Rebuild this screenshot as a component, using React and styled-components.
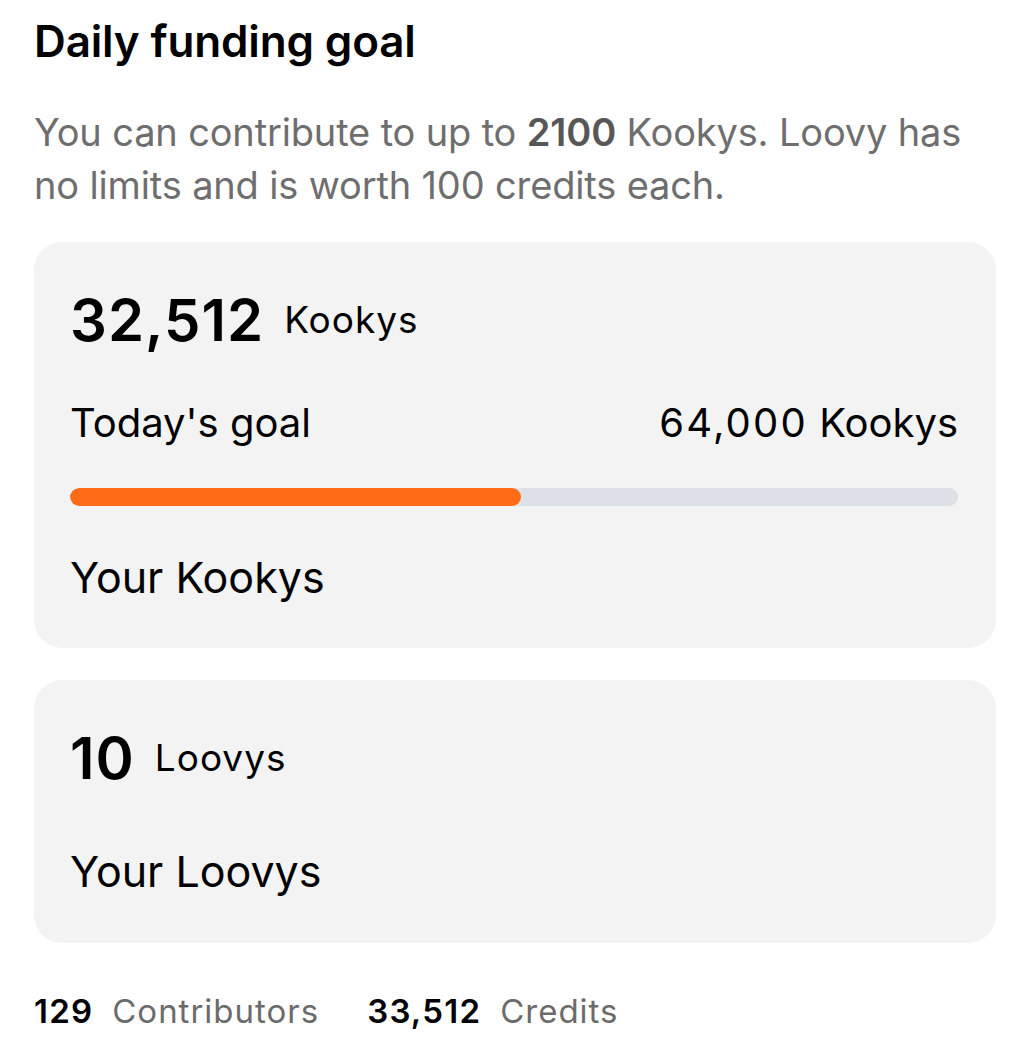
import React from "react";
import styled, { createGlobalStyle } from "styled-components";

const Global = createGlobalStyle`
  html, body { margin: 0; padding: 0; background: #ffffff; }
  body { font-family: Inter, "Noto Sans", "Liberation Sans", sans-serif; color: #000; }
`;

const Page = styled.div`
  padding: 14px 38px 0 34px;
  display: flex;
  flex-direction: column;
`;

const Title = styled.h1`
  margin: 0;
  font-size: 44px;
  font-weight: 600;
  line-height: 54px;
  letter-spacing: -0.15px;
`;

const Intro = styled.p`
  margin: 38px 0 0;
  font-size: 38px;
  line-height: 53px;
  letter-spacing: -0.15px;
  color: #6e6e6e;
  font-weight: 400;
  b { color: #575757; font-weight: 600; }
`;

const Card = styled.section`
  background: #f3f3f3;
  border-radius: 28px;
  padding: ${(p) => p.$pad};
  margin-top: ${(p) => p.$mt}px;
  display: flex;
  flex-direction: column;
`;

const Headline = styled.div`
  display: flex;
  align-items: center;
  gap: 20px;
`;

const BigNum = styled.span`
  font-size: 58px;
  font-weight: 600;
  line-height: 70px;
  letter-spacing: 1px;
`;

const Unit = styled.span`
  font-size: 37px;
  font-weight: 400;
  line-height: 44px;
  letter-spacing: 1px;
`;

const GoalRow = styled.div`
  display: flex;
  justify-content: space-between;
  align-items: baseline;
  margin-top: 44px;
  font-size: 40px;
  line-height: 48px;
`;

const Digits = styled.span`
  letter-spacing: 2.2px;
`;

const Track = styled.div`
  margin-top: 41px;
  height: 18px;
  border-radius: 9px;
  background: #dde0e6;
  overflow: hidden;
`;

const Fill = styled.div`
  height: 100%;
  background: #ff6b17;
  border-radius: 9px;
`;

const Label = styled.div`
  font-size: 43px;
  line-height: 52px;
  margin-top: ${(p) => p.$mt}px;
`;

const Footer = styled.div`
  display: flex;
  gap: 48px;
  margin-top: 48px;
  font-size: 33px;
  line-height: 40px;
  letter-spacing: 1px;
`;

const Stat = styled.div`
  display: flex;
  gap: 19px;
  align-items: baseline;
`;

const StatNum = styled.span`
  font-weight: 600;
  color: #000;
  letter-spacing: 1.2px;
`;

const StatLabel = styled.span`
  color: #6b6b6b;
`;

export default function App() {
  const pct = (32512 / 64000) * 100;
  return (
    <>
      <Global />
      <Page>
        <Title>Daily funding goal</Title>
        <Intro>
          You can contribute to up to <b>2100</b> Kookys. Loovy has no limits and is worth 100 credits each.
        </Intro>
        <Card $mt={30} $pad="43px 38px 45px 36px">
          <Headline>
            <BigNum>32,512</BigNum>
            <Unit>Kookys</Unit>
          </Headline>
          <GoalRow>
            <span>Today's goal</span>
            <span>
              <Digits>64,000</Digits> Kookys
            </span>
          </GoalRow>
          <Track>
            <Fill style={{ width: `${pct}%` }} />
          </Track>
          <Label $mt={45}>Your Kookys</Label>
        </Card>
        <Card $mt={32} $pad="43px 38px 46px 36px">
          <Headline>
            <BigNum>10</BigNum>
            <Unit>Loovys</Unit>
          </Headline>
          <Label $mt={52}>Your Loovys</Label>
        </Card>
        <Footer>
          <Stat>
            <StatNum>129</StatNum>
            <StatLabel>Contributors</StatLabel>
          </Stat>
          <Stat>
            <StatNum>33,512</StatNum>
            <StatLabel>Credits</StatLabel>
          </Stat>
        </Footer>
      </Page>
    </>
  );
}
